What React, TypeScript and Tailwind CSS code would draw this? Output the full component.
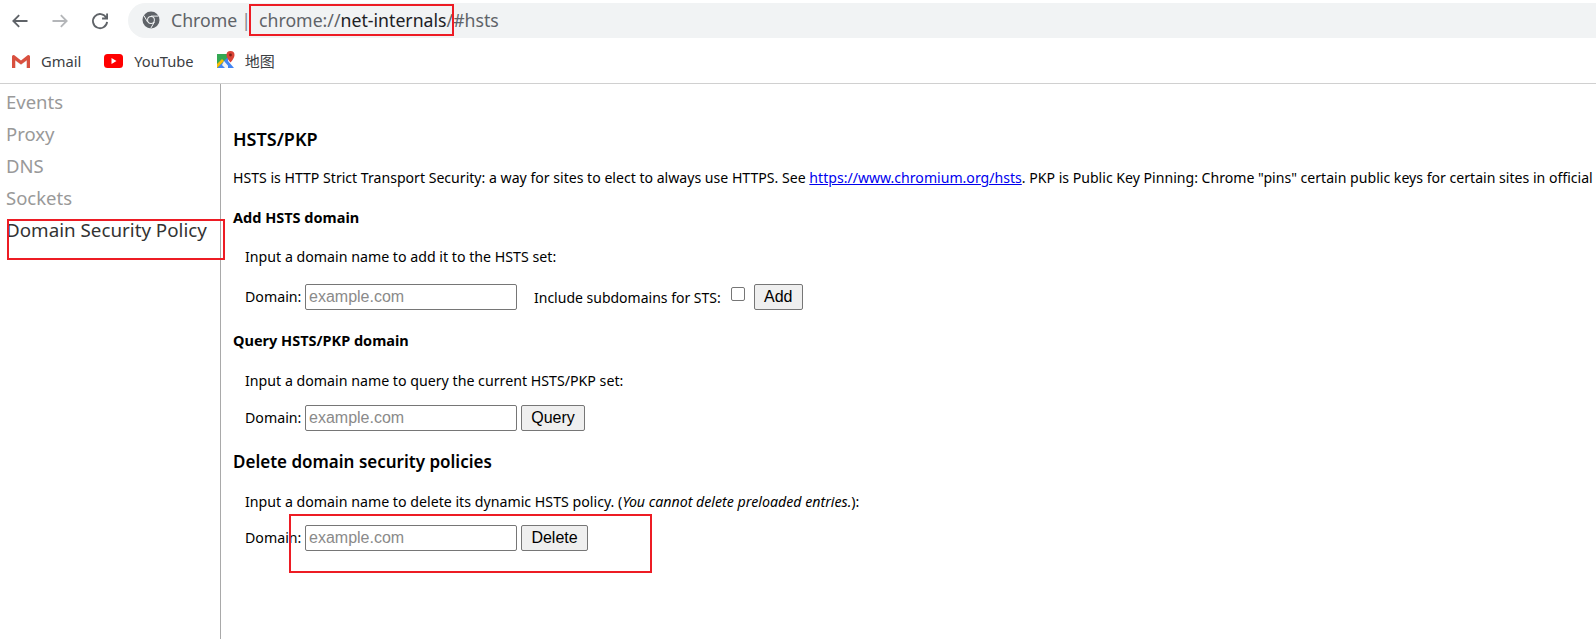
const FONT = "font-['Noto_Sans','Open_Sans',sans-serif]";

function ChromeLogo() {
  return (
    <svg width="18" height="18" viewBox="0 0 18 18" className="shrink-0">
      <circle cx="9" cy="9" r="8.5" fill="#5f6368" />
      <circle cx="9" cy="9" r="3.9" fill="#f1f3f4" />
      <circle cx="9" cy="9" r="2.9" fill="#5f6368" />
      <path d="M9 5.1h7.4M5.6 11 1.9 4.6M12.4 11l-3.7 6.4" stroke="#f1f3f4" strokeWidth="1" />
    </svg>
  );
}

function GmailLogo() {
  return (
    <svg width="20" height="15" viewBox="0 0 20 15">
      <path d="M1 14V2.5L10 9l9-6.500V14h-3.500V7L10 11 4.500 7v7z" fill="#e8e3e0" />
      <path d="M1 14V2.500a1.500 1.500 0 0 1 2.400-1.200L10 6.500l6.600-5.200A1.500 1.500 0 0 1 19 2.500V14h-3.200V6.300L10 10.500 4.200 6.300V14z" fill="#d9503f" />
    </svg>
  );
}

function YouTubeLogo() {
  return (
    <svg width="19" height="14" viewBox="0 0 19 14">
      <rect width="19" height="14" rx="3.500" fill="#f00" />
      <path d="M7.500 4v6l5-3z" fill="#fff" />
    </svg>
  );
}

function MapsLogo() {
  return (
    <svg width="20" height="20" viewBox="0 0 20 20">
      <path d="M1 3h11v14H1z" fill="#34a853" />
      <path d="M1 17 12 6v11z" fill="#4285f4" />
      <path d="M1 17 8 10l-2-2-5 5z" fill="#fbbc04" />
      <path d="M8 10l6 7H9l-3-3z" fill="#f3f3f3" />
      <path d="M12 17V10l6 7z" fill="#4285f4" />
      <path d="M14.500 0a4 4 0 0 0-4 4c0 3 4 7.500 4 7.500s4-4.500 4-7.500a4 4 0 0 0-4-4z" fill="#db4437" />
      <circle cx="14.500" cy="4" r="1.400" fill="#7b1f16" />
    </svg>
  );
}

function ToolbarIcon({ d, color }: { d: string; color: string }) {
  return (
    <svg width="20" height="20" viewBox="0 0 24 24" fill="none" stroke={color} strokeWidth="2.200">
      <path d={d} />
    </svg>
  );
}

function DomainRow({ children }: { children: React.ReactNode }) {
  return (
    <div className="flex items-center ml-3 h-[26px]">
      <span className="text-[14.200px] text-black w-[60px] shrink-0">Domain:</span>
      <input
        placeholder="example.com"
        readOnly
        className="w-[212px] h-[26px] border border-[#767676] rounded-[2px] px-[3px] bg-white text-[16px] font-['Liberation_Sans',sans-serif] placeholder:text-[#8a8a8a] outline-none"
      />
      {children}
    </div>
  );
}

function FormButton({ label, width }: { label: string; width: string }) {
  return (
    <button className={`${width} h-[26px] border border-[#767676] rounded-[2px] bg-[#efefef] text-[16px] text-black font-['Liberation_Sans',sans-serif] ml-1 shrink-0`}>
      {label}
    </button>
  );
}

export default function App() {
  return (
    <div className={`relative h-[639px] w-[1596px] overflow-hidden bg-white ${FONT}`}>
      {/* browser toolbar */}
      <div className="flex items-center h-[42px] pl-[10px]">
        <div className="flex items-center gap-5 w-[118px] shrink-0">
          <ToolbarIcon d="M21 12H4M11 5l-7 7 7 7" color="#5f6368" />
          <ToolbarIcon d="M3 12h17M13 5l7 7-7 7" color="#b4b6b9" />
          <ToolbarIcon d="M19.500 8A8.500 8.500 0 1 0 20.500 13M20.500 3v6h-6" color="#5f6368" />
        </div>
        <div className="flex items-center flex-1 h-[35px] mb-[2px] rounded-l-full bg-[#f1f3f4] pl-[14px] text-[17.700px] whitespace-nowrap">
          <ChromeLogo />
          <span className="ml-[11px] text-[#5f6368]">Chrome</span>
          <span className="ml-[4px] mr-[8px] text-[#80868b]">|</span>
          <span className="text-[#5f6368]">chrome://</span>
          <span className="text-[#202124]">net-internals</span>
          <span className="text-[#5f6368]">/#hsts</span>
        </div>
      </div>

      {/* bookmarks */}
      <div className="flex items-center h-[42px] pb-[3px] pl-[11px] border-b border-[#d0d0d0] text-[14.700px] text-[#3c4043]">
        <GmailLogo />
        <span className="ml-[10px]">Gmail</span>
        <div className="ml-[23px]"><YouTubeLogo /></div>
        <span className="ml-[11px]">YouTube</span>
        <div className="ml-[22px]"><MapsLogo /></div>
        <span className="ml-[9px] text-[15px] font-['Noto_Sans_CJK_SC',sans-serif]">地图</span>
      </div>

      <div className="flex h-[555px]">
        {/* sidebar */}
        <nav className="w-[221px] shrink-0 border-r border-[#a9a9a9] pl-[6px] pt-[2px] text-[18.500px] leading-[32px] whitespace-nowrap">
          <div className="text-[#999]">Events</div>
          <div className="text-[#999]">Proxy</div>
          <div className="text-[#999]">DNS</div>
          <div className="text-[#999]">Sockets</div>
          <div className="text-[18.800px] text-[#333]">Domain Security Policy</div>
        </nav>

        {/* HSTS panel */}
        <main className="flex-1 min-w-0 overflow-hidden pl-3 pt-[43px] text-black whitespace-nowrap">
          <h1 className="text-[18px] font-semibold leading-[24px]">HSTS/PKP</h1>
          <p className="mt-[17px] text-[14.100px] leading-[20px]">
            HSTS is HTTP Strict Transport Security: a way for sites to elect to always use HTTPS. See{" "}
            <a className="text-[#0000ee] underline">https://www.chromium.org/hsts</a>. PKP is Public Key Pinning: Chrome "pins" certain public keys for certain sites in official
          </p>
          <h2 className="mt-[19px] text-[14.500px] font-bold leading-[20px]">Add HSTS domain</h2>
          <p className="mt-[20px] ml-3 text-[14.200px] leading-[20px]">Input a domain name to add it to the HSTS set:</p>
          <div className="mt-[17px]">
            <DomainRow>
              <span className="ml-[17px] text-[14px]">Include subdomains for STS:</span>
              <input type="checkbox" readOnly className="ml-[10px] mb-[6px] w-[14px] h-[14px] shrink-0 appearance-none border border-[#767676] rounded-[2px] bg-white" />
              <FormButton label="Add" width="w-[49px] ml-[9px]" />
            </DomainRow>
          </div>
          <h2 className="mt-[20px] text-[14.500px] font-bold leading-[20px]">Query HSTS/PKP domain</h2>
          <p className="mt-[21px] ml-3 text-[14.200px] leading-[20px]">Input a domain name to query the current HSTS/PKP set:</p>
          <div className="mt-[14px]">
            <DomainRow>
              <FormButton label="Query" width="w-[64px]" />
            </DomainRow>
          </div>
          <h2 className="mt-[19px] text-[17px] font-semibold leading-[24px]">Delete domain security policies</h2>
          <p className="mt-[18px] ml-3 text-[14.200px] leading-[20px]">
            Input a domain name to delete its dynamic HSTS policy. (<em>You cannot delete preloaded entries.</em>):
          </p>
          <div className="mt-[13px]">
            <DomainRow>
              <FormButton label="Delete" width="w-[67px]" />
            </DomainRow>
          </div>
        </main>
      </div>

      {/* red annotation boxes drawn over the screenshot */}
      <div className="absolute left-[249px] top-[4px] w-[205px] h-[32px] border-2 border-[#ed1c24]" />
      <div className="absolute left-[7px] top-[219px] w-[218px] h-[41px] border-2 border-[#ed1c24]" />
      <div className="absolute left-[289px] top-[514px] w-[363px] h-[59px] border-2 border-[#ed1c24]" />
    </div>
  );
}
